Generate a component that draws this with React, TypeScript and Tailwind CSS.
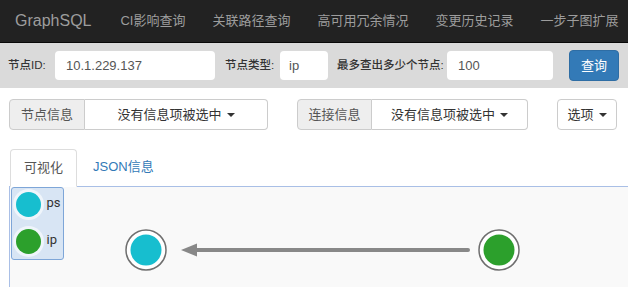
import React from "react";

const font = "font-['Liberation_Sans','Noto_Sans_CJK_SC',sans-serif]";

function Caret() {
  return (
    <span className="inline-block ml-[5px] align-middle w-0 h-0 border-t-[4px] border-t-current border-x-[4px] border-x-transparent" />
  );
}

function InfoGroup({ label, labelW, dropW }: { label: string; labelW: string; dropW: string }) {
  return (
    <div className="flex h-[31px]">
      <div className={`${labelW} flex items-center justify-center bg-[#eeeeee] border border-[#cccccc] rounded-l-[4px] text-[13px] text-[#555555]`}>
        {label}
      </div>
      <button className={`${dropW} flex items-center justify-center bg-white border border-l-0 border-[#cccccc] rounded-r-[4px] text-[13px] text-[#333333]`}>
        没有信息项被选中
        <Caret />
      </button>
    </div>
  );
}

function Node({ cx, cy, color }: { cx: number; cy: number; color: string }) {
  return (
    <g>
      <circle cx={cx} cy={cy} r={20} fill="#ffffff" stroke="#6f6f6f" strokeWidth={1.5} />
      <circle cx={cx} cy={cy} r={15.5} fill={color} />
    </g>
  );
}

export default function App() {
  const navItems = ["CI影响查询", "关联路径查询", "高可用冗余情况", "变更历史记录", "一步子图扩展"];

  return (
    <div className={`w-[628px] h-[287px] overflow-hidden bg-white flex flex-col ${font}`}>
      {/* navbar */}
      <div className="h-[43px] shrink-0 bg-[#222222] border-b border-[#080808] flex items-center whitespace-nowrap">
        <span className="pl-[15px] text-[16px] text-[#9d9d9d] mr-[29px]">GraphSQL</span>
        <div className="flex gap-[27px] text-[13px] text-[#9d9d9d]">
          {navItems.map((t) => (
            <span key={t}>{t}</span>
          ))}
        </div>
      </div>

      {/* search form */}
      <div className="h-[45px] shrink-0 bg-[#dadada] flex items-center pl-[8px] whitespace-nowrap text-[11.5px] font-medium text-[#333333]">
        <label className="w-[47px]">节点ID:</label>
        <div className="w-[160px] h-[29px] bg-white rounded-[4px] flex items-center pl-[11px] text-[13px] font-normal text-[#555555]">
          10.1.229.137
        </div>
        <label className="ml-[10px] w-[55px]">节点类型:</label>
        <div className="w-[48px] h-[29px] bg-white rounded-[4px] flex items-center pl-[9px] text-[13px] font-normal text-[#555555]">
          ip
        </div>
        <label className="ml-[9px] w-[110px]">最多查出多少个节点:</label>
        <div className="w-[106px] h-[29px] bg-white rounded-[4px] flex items-center pl-[11px] text-[13px] font-normal text-[#555555]">
          100
        </div>
        <button className="ml-[16px] w-[50px] h-[31px] bg-[#337ab7] border border-[#2e6da4] rounded-[4px] text-white text-[13px] font-normal">
          查询
        </button>
      </div>

      {/* info selectors */}
      <div className="mt-[11px] flex pl-[9px] whitespace-nowrap">
        <InfoGroup label="节点信息" labelW="w-[76px]" dropW="w-[183px]" />
        <div className="ml-[29px]">
          <InfoGroup label="连接信息" labelW="w-[75px]" dropW="w-[156px]" />
        </div>
        <button className="ml-[29px] w-[60px] h-[31px] flex items-center justify-center bg-white border border-[#cccccc] rounded-[4px] text-[13px] text-[#333333]">
          选项
          <Caret />
        </button>
      </div>

      {/* tabs */}
      <div className="mt-[18px] ml-[9px] pl-[1px] flex items-end border-b border-[#a9bfe6] whitespace-nowrap">
        <div className="w-[67px] h-[38px] -mb-px flex items-center justify-center bg-white border border-[#dddddd] border-b-white rounded-t-[4px] text-[13px] text-[#555555]">
          可视化
        </div>
        <div className="h-[38px] flex items-center pl-[16px] text-[13px] text-[#337ab7]">JSON信息</div>
      </div>

      {/* graph canvas */}
      <div className="relative flex-1 ml-[9px] border-l border-[#a9bfe6] bg-[#f9f9f9]">
        <svg className="absolute inset-0" width="619" height="100">
          <line x1={184} y1={63} x2={458} y2={63} stroke="#888888" strokeWidth={4} strokeLinecap="round" />
          <polygon points="171,63 187,56.5 187,69.5" fill="#888888" />
          <Node cx={136} cy={63} color="#17becf" />
          <Node cx={489} cy={63} color="#2ca02c" />
        </svg>

        <div className="absolute left-[1px] top-0 w-[53px] h-[73px] bg-[#d8e5f4] border border-[#7ea6d8] rounded-[3px] flex flex-col gap-[12px] pt-[3.5px] pl-[3.5px] text-[13px] text-[#333333] font-['Roboto',sans-serif]">
          <div className="flex items-center h-[25px]">
            <span className="w-[25px] h-[25px] rounded-full bg-[#17becf] ring-[3px] ring-white/60" />
            <span className="ml-[6px] -mt-[2px]">ps</span>
          </div>
          <div className="flex items-center h-[25px]">
            <span className="w-[25px] h-[25px] rounded-full bg-[#2ca02c] ring-[3px] ring-white/60" />
            <span className="ml-[6px] -mt-[2px]">ip</span>
          </div>
        </div>
      </div>
    </div>
  );
}
